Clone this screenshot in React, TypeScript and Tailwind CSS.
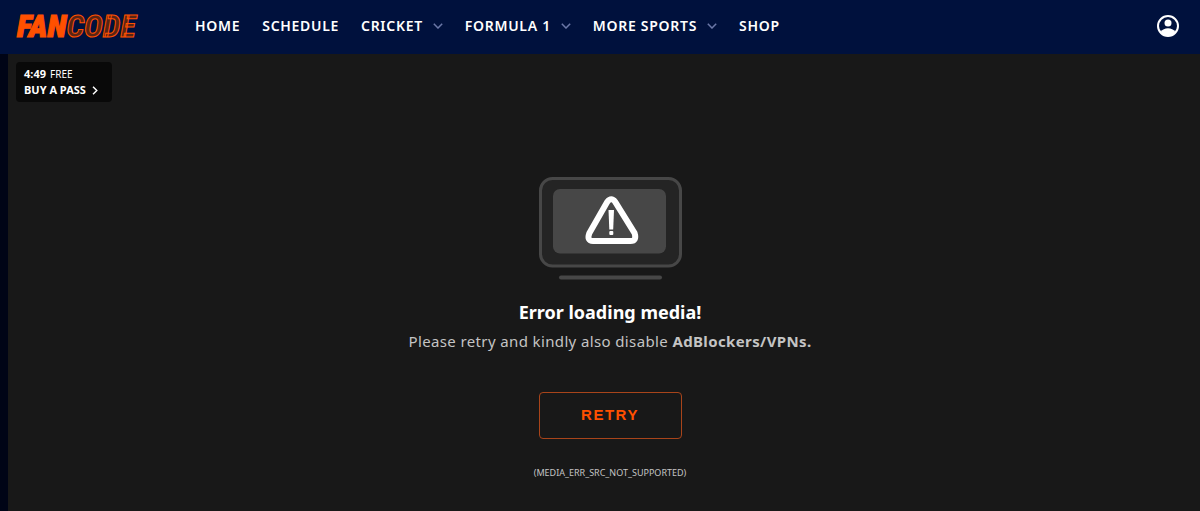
import React from 'react';

interface NavItem {
  label: string;
  href: string;
  hasMenu?: boolean;
}

const navItems: NavItem[] = [
  { label: 'HOME', href: '#home' },
  { label: 'SCHEDULE', href: '#schedule' },
  { label: 'CRICKET', href: '#cricket', hasMenu: true },
  { label: 'FORMULA 1', href: '#formula-1', hasMenu: true },
  { label: 'MORE SPORTS', href: '#more-sports', hasMenu: true },
  { label: 'SHOP', href: '#shop' },
];

const Logo: React.FC = () => (
  <a
    href="#home"
    className="flex w-[178px] shrink-0 items-center font-['Roboto_Condensed','Open_Sans_Condensed','Noto_Sans_CJK_JP',sans-serif] text-[32px] leading-8 font-black italic text-[#ff5000]"
  >
    <span className="[-webkit-text-stroke:1px_#ff5000]">FAN</span>
    <span className="font-bold text-[#5a2413] [-webkit-text-stroke:1px_#ff5000]">CODE</span>
  </a>
);

const ChevronDown: React.FC = () => (
  <svg viewBox="0 0 10 6" className="h-[6px] w-[10px]" fill="none" stroke="#6b78a8" strokeWidth="1.5">
    <path d="M0.8 0.8 5 5 9.2 0.8" />
  </svg>
);

const UserIcon: React.FC = () => (
  <svg viewBox="0 0 24 24" className="h-6 w-6">
    <circle cx="12" cy="12" r="10" fill="none" stroke="#fff" strokeWidth="2" />
    <circle cx="12" cy="9" r="3.5" fill="#fff" />
    <path d="M4.6 18C6.3 15.4 9 14.3 12 14.3s5.7 1.1 7.4 3.7C17.7 20.5 15 22 12 22s-5.7-1.5-7.4-4Z" fill="#fff" />
  </svg>
);

const Header: React.FC = () => (
  <header className="flex h-[54px] items-center bg-[#00113d] pr-5 pb-0.5 pl-[17px]">
    <Logo />
    <nav className="flex flex-1 items-center gap-[22px]">
      {navItems.map((item) => (
        <a
          key={item.label}
          href={item.href}
          className="flex items-center gap-2.5 text-sm leading-5 font-semibold tracking-wider whitespace-nowrap text-white"
        >
          {item.label}
          {item.hasMenu && <ChevronDown />}
        </a>
      ))}
    </nav>
    <button type="button" aria-label="Account" className="cursor-pointer">
      <UserIcon />
    </button>
  </header>
);

const PassBadge: React.FC = () => (
  <a
    href="#buy-pass"
    className="absolute top-2 left-2 w-24 rounded bg-[#090909] px-2 py-1 text-[11px] leading-4 font-bold text-white"
  >
    <div className="flex gap-1">
      <span>4:49</span>
      <span className="text-[10px] font-normal">FREE</span>
    </div>
    <div className="flex items-center gap-[6px]">
      BUY A PASS
      <svg viewBox="0 0 6 10" className="h-[9px] w-[6px]" fill="none" stroke="#fff" strokeWidth="1.6">
        <path d="M0.8 0.8 5 5 0.8 9.2" />
      </svg>
    </div>
  </a>
);

const ErrorArt: React.FC = () => (
  <svg viewBox="0 0 143 103" className="h-[103px] w-[143px]">
    <rect x="1.5" y="1.5" width="140" height="87.5" rx="12" fill="#242424" stroke="#474747" strokeWidth="3" />
    <rect x="14" y="12" width="113" height="64.5" rx="7" fill="#474747" />
    <path
      d="M68.3 24.8 50.3 56.2Q47.6 64 54 64H91.5Q98 64 95.6 56.2L76.2 24.8Q72.3 19.8 68.3 24.8Z"
      fill="none"
      stroke="#fff"
      strokeWidth="6"
      strokeLinejoin="round"
    />
    <path d="M69.5 33H75L74.2 52.5H70.3Z" fill="#fff" />
    <rect x="70.3" y="54" width="4" height="4" rx="1" fill="#fff" />
    <rect x="20" y="98.5" width="103" height="4" rx="2" fill="#474747" />
  </svg>
);

export default function App() {
  return (
    <div className="flex min-h-screen flex-col bg-[#000416] font-['Noto_Sans',sans-serif]">
      <Header />
      <main className="relative ml-2 flex flex-1 flex-col items-center bg-[#181818] pt-[123px] pb-7 pl-3 text-center">
        <PassBadge />
        <ErrorArt />
        <h1 className="mt-[18px] text-lg leading-7 font-bold text-white">Error loading media!</h1>
        <p className="mt-[3px] text-[15px] leading-6 tracking-wide text-[#c4c4c4]">
          Please retry and kindly also disable <strong className="font-bold">AdBlockers/VPNs.</strong>
        </p>
        <button
          type="button"
          className="mt-[39px] h-[47px] w-[143px] cursor-pointer rounded border border-[#a8441a] font-['Liberation_Sans',sans-serif] text-[15px] font-bold tracking-widest text-[#ff5000]"
        >
          RETRY
        </button>
        <p className="mt-[26px] text-[9px] leading-4 text-[#c4c4c4]">(MEDIA_ERR_SRC_NOT_SUPPORTED)</p>
      </main>
    </div>
  );
}
